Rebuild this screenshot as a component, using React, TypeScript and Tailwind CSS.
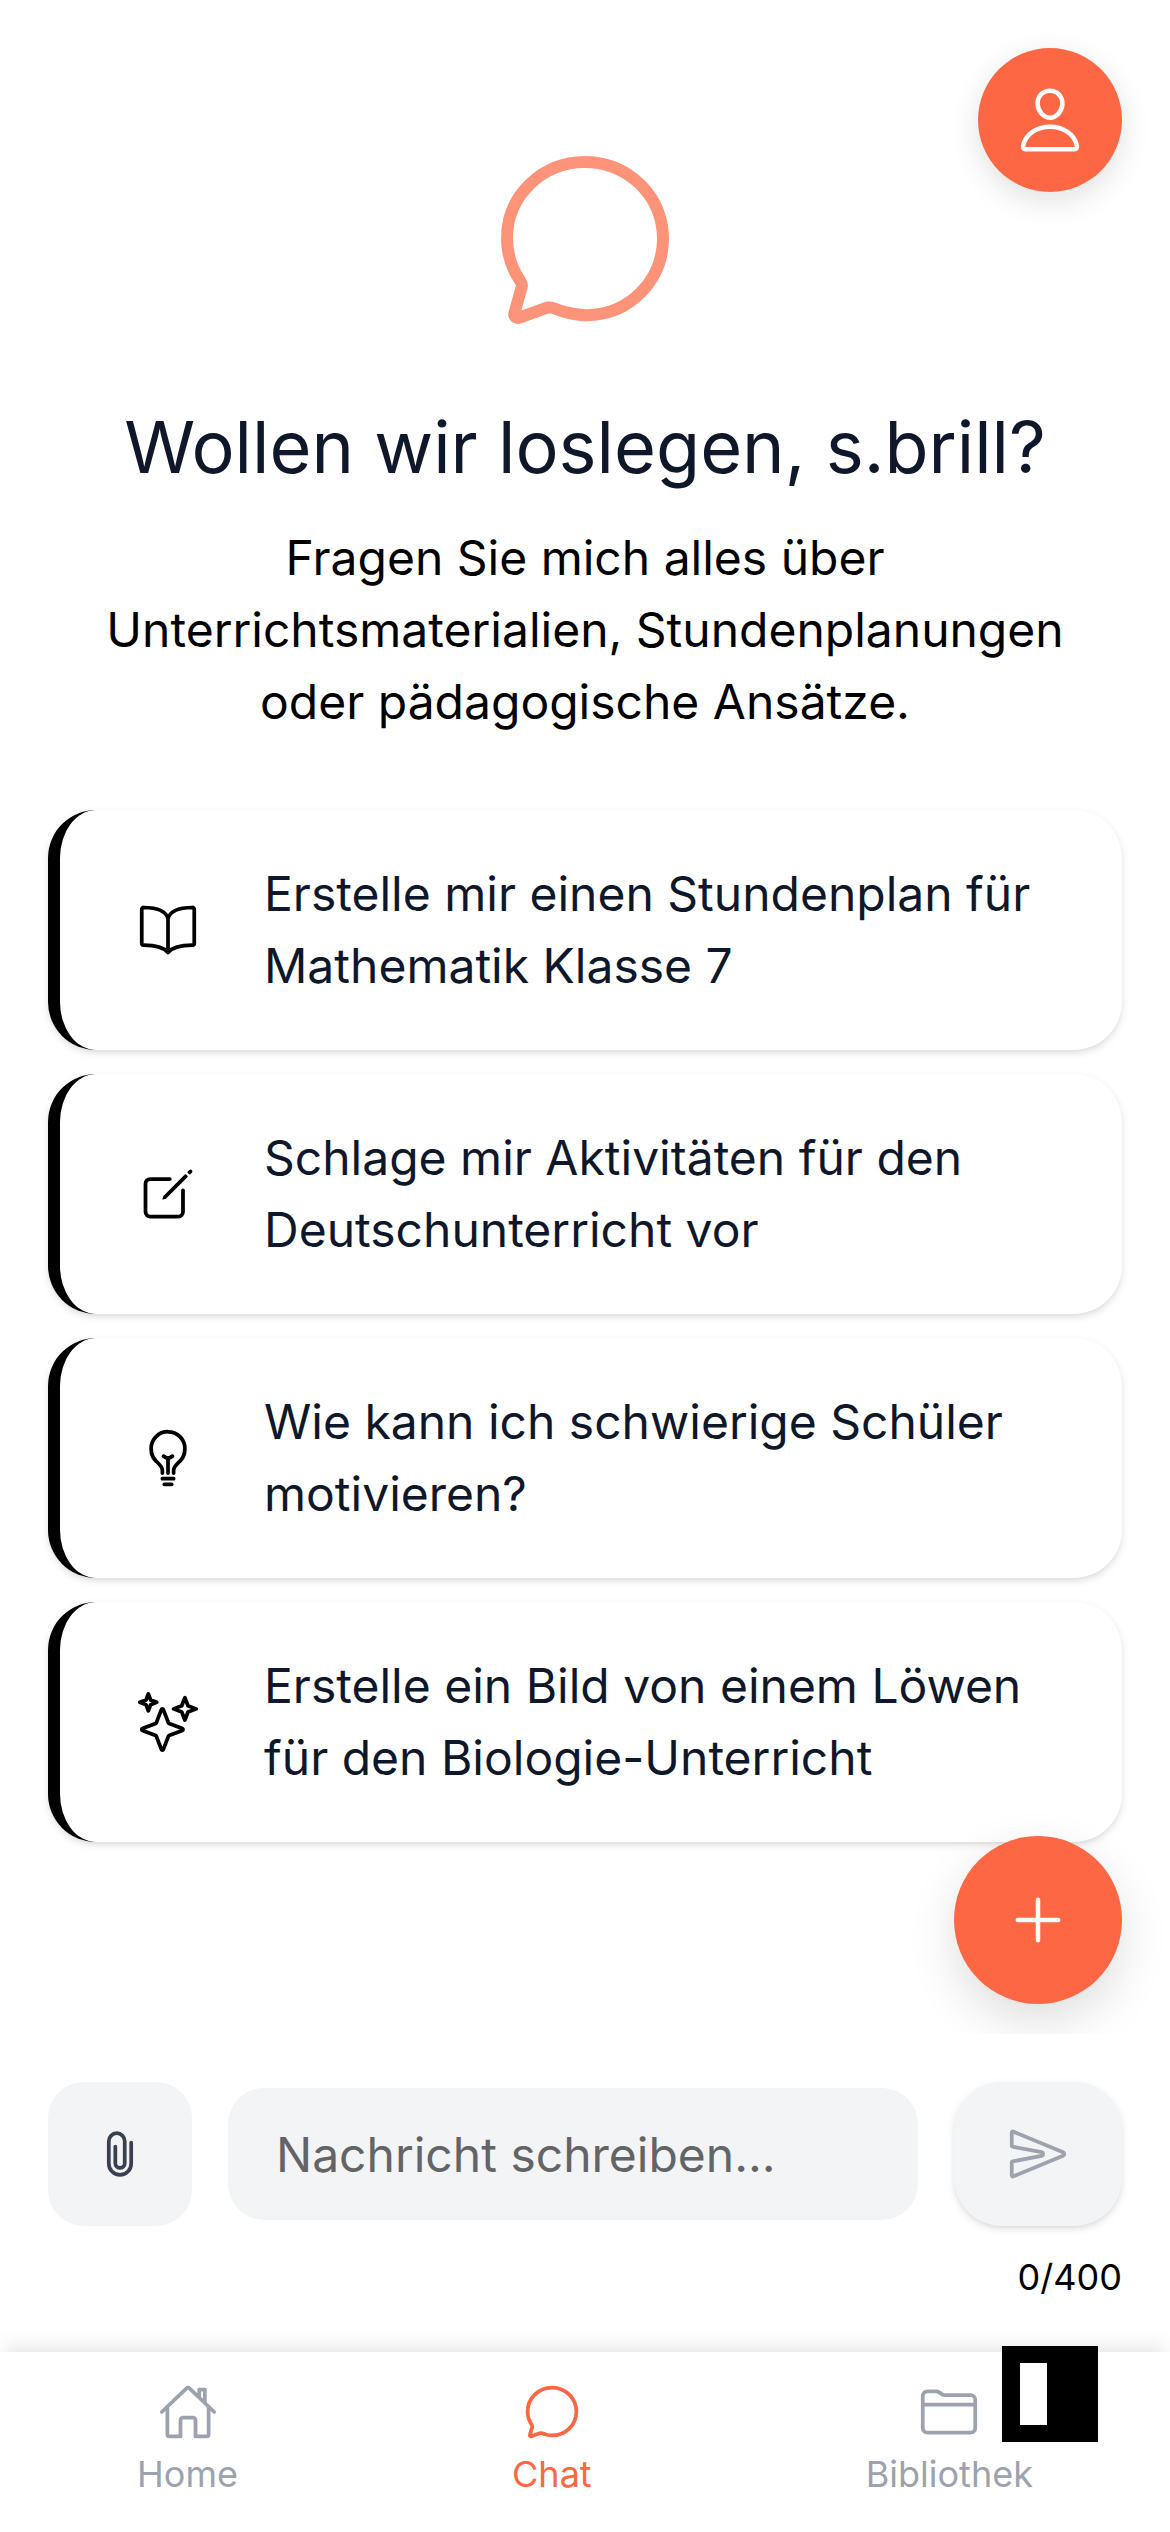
import { useState } from "react";
import type { IconType } from "react-icons";
import {
  IoAddOutline,
  IoAttachOutline,
  IoBookOutline,
  IoBulbOutline,
  IoChatbubbleOutline,
  IoCreateOutline,
  IoFolderOutline,
  IoHomeOutline,
  IoPersonOutline,
  IoSendOutline,
  IoSparklesOutline,
} from "react-icons/io5";

const MAX_LENGTH = 400;

const suggestions: { icon: IconType; text: string }[] = [
  { icon: IoBookOutline, text: "Erstelle mir einen Stundenplan für Mathematik Klasse 7" },
  { icon: IoCreateOutline, text: "Schlage mir Aktivitäten für den Deutschunterricht vor" },
  { icon: IoBulbOutline, text: "Wie kann ich schwierige Schüler motivieren?" },
  { icon: IoSparklesOutline, text: "Erstelle ein Bild von einem Löwen für den Biologie-Unterricht" },
];

const tabs: { icon: IconType; label: string; active: boolean }[] = [
  { icon: IoHomeOutline, label: "Home", active: false },
  { icon: IoChatbubbleOutline, label: "Chat", active: true },
  { icon: IoFolderOutline, label: "Bibliothek", active: false },
];

function SuggestionCard({ icon: Icon, text, onSelect }: { icon: IconType; text: string; onSelect: () => void }) {
  return (
    <button
      type="button"
      onClick={onSelect}
      className="flex w-full items-center gap-9 rounded-[48px] border-l-12 border-black bg-white p-12 text-left shadow-[0_3px_9px_rgba(0,0,0,0.1),0_3px_6px_-3px_rgba(0,0,0,0.1)]"
    >
      <span className="flex size-30 shrink-0 items-center justify-center text-black">
        <Icon size={60} />
      </span>
      <span className="text-[48px] leading-[72px] text-[#0f172a]">{text}</span>
    </button>
  );
}

function Composer({ value, onChange }: { value: string; onChange: (value: string) => void }) {
  return (
    <form className="bg-white px-12 pt-12 pb-12" onSubmit={(event) => event.preventDefault()}>
      <div className="flex items-center gap-9">
        <button
          type="button"
          aria-label="Datei anhängen"
          className="flex size-36 shrink-0 items-center justify-center rounded-[36px] bg-[#f3f4f6] text-[#374151]"
        >
          <IoAttachOutline size={60} />
        </button>
        <input
          type="text"
          aria-label="Nachricht"
          placeholder="Nachricht schreiben..."
          maxLength={MAX_LENGTH}
          value={value}
          onChange={(event) => onChange(event.target.value)}
          className="h-33 min-w-0 flex-1 rounded-[36px] bg-[#f3f4f6] px-12 text-[48px] text-[#0f172a] outline-none placeholder:text-[#636466]"
        />
        <button
          type="submit"
          aria-label="Senden"
          className="flex h-36 w-42 shrink-0 items-center justify-center rounded-[48px] bg-[#f3f4f6] text-[#9ca3af] shadow-[0_3px_9px_rgba(0,0,0,0.1),0_3px_6px_-3px_rgba(0,0,0,0.1)]"
        >
          <IoSendOutline size={60} />
        </button>
      </div>
      <p className="mt-6 text-right text-[36px] leading-[54px] text-black">
        {value.length}/{MAX_LENGTH}
      </p>
    </form>
  );
}

function TabBar() {
  return (
    <nav className="relative flex h-45 justify-around bg-white pt-[30px] shadow-[0_-12px_18px_-3px_rgba(0,0,0,0.06),0_-6px_12px_-6px_rgba(0,0,0,0.05)]">
      {tabs.map(({ icon: Icon, label, active }) => (
        <a
          key={label}
          href={"#" + label.toLowerCase()}
          aria-current={active ? "page" : undefined}
          className={
            active
              ? "flex flex-col items-center gap-2 text-[#fd6743]"
              : "flex flex-col items-center gap-2 text-[#9ca3af]"
          }
        >
          <Icon size={60} />
          <span className="text-[36px] leading-[48px]">{label}</span>
        </a>
      ))}
      <div className="absolute -top-1.5 right-18 size-24 bg-black pt-[17px] pl-[18px]">
        <div className="h-[62px] w-[27px] bg-white" />
      </div>
    </nav>
  );
}

export default function App() {
  const [message, setMessage] = useState("");

  return (
    <div className="flex min-h-screen flex-col bg-white font-['Inter',sans-serif] [font-optical-sizing:none]">
      <main className="relative flex-1 overflow-hidden px-12 pt-36">
        <button
          type="button"
          aria-label="Profil"
          className="absolute top-12 right-12 flex size-36 items-center justify-center rounded-full bg-[#fd6743] text-white shadow-[0_9px_30px_rgba(0,0,0,0.12)]"
        >
          <IoPersonOutline size={72} />
        </button>

        <section className="flex flex-col items-center text-center">
          <IoChatbubbleOutline size={192} className="text-[#fd6743] opacity-70" />
          <h1 className="mt-12 text-[72px] leading-[126px] text-[#0f172a]">Wollen wir loslegen, s.brill?</h1>
          <p className="mt-3 text-[48px] leading-[72px] text-black">
            Fragen Sie mich alles über Unterrichtsmaterialien, Stundenplanungen oder pädagogische Ansätze.
          </p>
        </section>

        <section className="mt-18 flex flex-col gap-6">
          {suggestions.map(({ icon, text }) => (
            <SuggestionCard key={text} icon={icon} text={text} onSelect={() => setMessage(text)} />
          ))}
        </section>

        <button
          type="button"
          aria-label="Neuer Chat"
          className="absolute right-12 bottom-[30px] flex size-42 items-center justify-center rounded-full bg-[#fd6743] text-white shadow-[0_18px_48px_rgba(0,0,0,0.13)]"
        >
          <IoAddOutline size={72} />
        </button>
      </main>

      <Composer value={message} onChange={setMessage} />
      <TabBar />
    </div>
  );
}
